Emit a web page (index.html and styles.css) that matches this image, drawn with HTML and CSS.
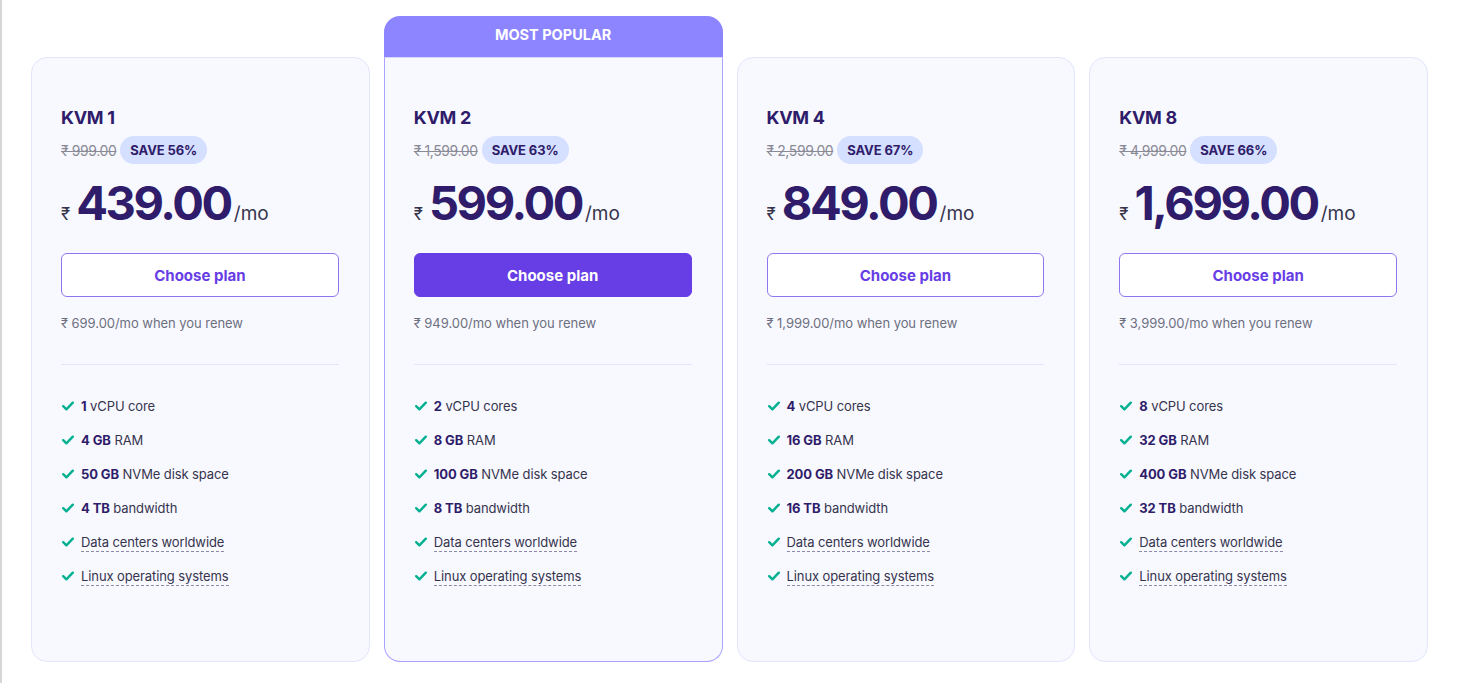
FILE: index.html
```html
<!DOCTYPE html>
<html lang="en">
<head>
<meta charset="utf-8">
<title>VPS Plans</title>
<link rel="stylesheet" href="styles.css">
</head>
<body>
<svg width="0" height="0" class="defs" aria-hidden="true">
  <defs>
    <symbol id="check" viewBox="0 0 12 10">
      <path d="M1.2 5.2 L4.4 8.3 L10.8 1.7" fill="none" stroke="#00b090" stroke-width="2.4" stroke-linecap="round" stroke-linejoin="round"/>
    </symbol>
  </defs>
</svg>
<main class="plans">
  <section class="col">
    <div class="card">
      <h3 class="plan-name">KVM 1</h3>
      <div class="old-row"><span class="old">₹ 999.00</span><span class="save">SAVE 56%</span></div>
      <div class="price"><span class="cur">₹</span><span class="amount">439.00</span><span class="per">/mo</span></div>
      <button class="btn">Choose plan</button>
      <p class="renew">₹ 699.00/mo when you renew</p>
      <hr class="divider">
      <ul class="features">
        <li><svg class="ck"><use href="#check"/></svg><span><b>1</b> vCPU core</span></li>
        <li><svg class="ck"><use href="#check"/></svg><span><b>4 GB</b> RAM</span></li>
        <li><svg class="ck"><use href="#check"/></svg><span><b>50 GB</b> NVMe disk space</span></li>
        <li><svg class="ck"><use href="#check"/></svg><span><b>4 TB</b> bandwidth</span></li>
        <li><svg class="ck"><use href="#check"/></svg><span class="dash">Data centers worldwide</span></li>
        <li><svg class="ck"><use href="#check"/></svg><span class="dash">Linux operating systems</span></li>
      </ul>
    </div>
  </section>
  <section class="col popular">
    <div class="badge">MOST POPULAR</div>
    <div class="card">
      <h3 class="plan-name">KVM 2</h3>
      <div class="old-row"><span class="old">₹ 1,599.00</span><span class="save">SAVE 63%</span></div>
      <div class="price"><span class="cur">₹</span><span class="amount">599.00</span><span class="per">/mo</span></div>
      <button class="btn primary">Choose plan</button>
      <p class="renew">₹ 949.00/mo when you renew</p>
      <hr class="divider">
      <ul class="features">
        <li><svg class="ck"><use href="#check"/></svg><span><b>2</b> vCPU cores</span></li>
        <li><svg class="ck"><use href="#check"/></svg><span><b>8 GB</b> RAM</span></li>
        <li><svg class="ck"><use href="#check"/></svg><span><b>100 GB</b> NVMe disk space</span></li>
        <li><svg class="ck"><use href="#check"/></svg><span><b>8 TB</b> bandwidth</span></li>
        <li><svg class="ck"><use href="#check"/></svg><span class="dash">Data centers worldwide</span></li>
        <li><svg class="ck"><use href="#check"/></svg><span class="dash">Linux operating systems</span></li>
      </ul>
    </div>
  </section>
  <section class="col">
    <div class="card">
      <h3 class="plan-name">KVM 4</h3>
      <div class="old-row"><span class="old">₹ 2,599.00</span><span class="save">SAVE 67%</span></div>
      <div class="price"><span class="cur">₹</span><span class="amount">849.00</span><span class="per">/mo</span></div>
      <button class="btn">Choose plan</button>
      <p class="renew">₹ 1,999.00/mo when you renew</p>
      <hr class="divider">
      <ul class="features">
        <li><svg class="ck"><use href="#check"/></svg><span><b>4</b> vCPU cores</span></li>
        <li><svg class="ck"><use href="#check"/></svg><span><b>16 GB</b> RAM</span></li>
        <li><svg class="ck"><use href="#check"/></svg><span><b>200 GB</b> NVMe disk space</span></li>
        <li><svg class="ck"><use href="#check"/></svg><span><b>16 TB</b> bandwidth</span></li>
        <li><svg class="ck"><use href="#check"/></svg><span class="dash">Data centers worldwide</span></li>
        <li><svg class="ck"><use href="#check"/></svg><span class="dash">Linux operating systems</span></li>
      </ul>
    </div>
  </section>
  <section class="col">
    <div class="card">
      <h3 class="plan-name">KVM 8</h3>
      <div class="old-row"><span class="old">₹ 4,999.00</span><span class="save">SAVE 66%</span></div>
      <div class="price"><span class="cur">₹</span><span class="amount">1,699.00</span><span class="per">/mo</span></div>
      <button class="btn">Choose plan</button>
      <p class="renew">₹ 3,999.00/mo when you renew</p>
      <hr class="divider">
      <ul class="features">
        <li><svg class="ck"><use href="#check"/></svg><span><b>8</b> vCPU cores</span></li>
        <li><svg class="ck"><use href="#check"/></svg><span><b>32 GB</b> RAM</span></li>
        <li><svg class="ck"><use href="#check"/></svg><span><b>400 GB</b> NVMe disk space</span></li>
        <li><svg class="ck"><use href="#check"/></svg><span><b>32 TB</b> bandwidth</span></li>
        <li><svg class="ck"><use href="#check"/></svg><span class="dash">Data centers worldwide</span></li>
        <li><svg class="ck"><use href="#check"/></svg><span class="dash">Linux operating systems</span></li>
      </ul>
    </div>
  </section>
</main>
</body>
</html>
```
FILE: styles.css
```css
* { box-sizing: border-box; }
html, body { margin: 0; padding: 0; }
body {
  background: #ffffff;
  border-left: 2px solid #d6d6d6;
  height: 683px;
  overflow: hidden;
  font-family: Inter, "Noto Sans", "Liberation Sans", sans-serif;
  color: #2f1c6a;
}
.defs { position: absolute; width: 0; height: 0; }
.plans {
  display: flex;
  gap: 14px;
  padding: 16px 0 0 29px;
  width: 1426px;
}
.col {
  flex: 1 1 0;
  min-width: 0;
  height: 646px;
  display: flex;
  flex-direction: column;
  padding-top: 41px;
}
.col.popular { padding-top: 0; }
.badge {
  height: 41px;
  background: #8c85ff;
  color: #ffffff;
  border-radius: 16px 16px 0 0;
  font-weight: 700;
  font-size: 14.5px;
  letter-spacing: 0;
  display: flex;
  align-items: center;
  justify-content: center;
  padding-bottom: 4px;
}
.card {
  flex: 1;
  background: #f8f9ff;
  border: 1px solid #e2e5fc;
  border-radius: 16px;
  padding: 48px 30px 0 29px;
}
.popular .card {
  border: 1px solid #a9a2ff;
  border-top: 1px solid #d9d6ff;
  border-radius: 0 0 16px 16px;
}
.plan-name {
  margin: 0;
  font-size: 18px;
  line-height: 24px;
  font-weight: 700;
  letter-spacing: -0.3px;
  color: #2f1c6a;
}
.old-row {
  display: flex;
  align-items: center;
  gap: 4px;
  margin-top: 6px;
  height: 28px;
}
.old {
  font-size: 14px;
  color: #8a8a96;
  text-decoration: line-through;
  letter-spacing: -0.4px;
}
.save {
  height: 28px;
  padding: 0 10px;
  border-radius: 14px;
  background: #d5dfff;
  color: #2f1c6a;
  font-size: 13px;
  font-weight: 700;
  display: flex;
  align-items: center;
  letter-spacing: -0.1px;
}
.price {
  margin-top: 11px;
  height: 56px;
  display: flex;
  align-items: baseline;
  line-height: 56px;
  color: #2f1c6a;
}
.cur {
  font-size: 17px;
  margin-right: 6px;
  color: #36344d;
}
.amount {
  font-size: 47px;
  font-weight: 700;
  letter-spacing: -2.4px;
}
.per {
  font-size: 19px;
  margin-left: 3px;
  color: #36344d;
}
.btn {
  display: block;
  width: 100%;
  height: 44px;
  margin-top: 22px;
  border: 1px solid #8f76f0;
  border-radius: 6px;
  background: #ffffff;
  color: #673de6;
  font-family: inherit;
  font-size: 15px;
  font-weight: 700;
  letter-spacing: 0;
}
.btn.primary {
  background: #673de6;
  border-color: #673de6;
  color: #ffffff;
}
.renew {
  margin: 16px 0 0;
  font-size: 13px;
  line-height: 20px;
  color: #6d6f80;
  letter-spacing: -0.05px;
}
.divider {
  border: none;
  border-top: 1px solid #e2e5fc;
  margin: 31px 0 0;
}
.features {
  list-style: none;
  margin: 31px 0 0;
  padding: 0;
  display: flex;
  flex-direction: column;
  gap: 14px;
}
.features li {
  display: flex;
  align-items: center;
  gap: 7px;
  height: 20px;
  font-size: 13px;
  line-height: 20px;
  color: #36344d;
  letter-spacing: -0.1px;
}
.features b { color: #2f1c6a; font-weight: 700; }
.ck { width: 12px; height: 10px; flex: none; margin-left: 1px; }
.dash {
  line-height: 18px;
  border-bottom: 1px dashed #8d8aa6;
}
```
